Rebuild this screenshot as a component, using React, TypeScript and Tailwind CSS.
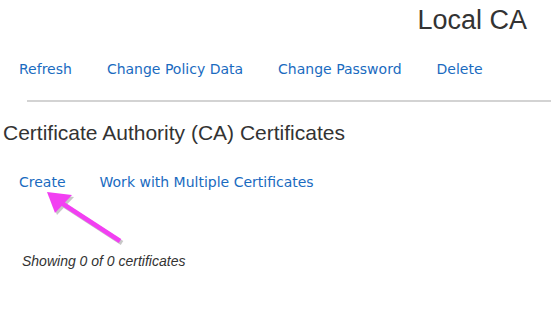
// Local CA — certificate authority overview

const topActions = ["Refresh", "Change Policy Data", "Change Password", "Delete"];
const certActions = ["Create", "Work with Multiple Certificates"];

function ActionLink({ label }: { label: string }) {
  return (
    <a
      href="#"
      className="text-[14px] leading-none text-[#1a6bbf] whitespace-nowrap"
      style={{ fontFamily: "'DejaVu Sans', Verdana, sans-serif" }}
    >
      {label}
    </a>
  );
}

function PointerArrow() {
  return (
    <svg className="absolute left-[40px] top-[185px]" width="90" height="65" viewBox="0 0 90 65">
      {/* soft shadow */}
      <g fill="#9a9a9a" opacity="0.55" transform="translate(2 2)">
        <polygon points="7,7 32,10 15,28" />
        <line x1="20" y1="17" x2="80" y2="56" stroke="#9a9a9a" strokeWidth="4.5" />
      </g>
      <polygon points="7,7 32,10 15,28" fill="#f23ff2" />
      <line x1="20" y1="17" x2="80" y2="56" stroke="#f23ff2" strokeWidth="4.5" strokeLinecap="butt" />
    </svg>
  );
}

export default function App() {
  return (
    <div
      className="relative w-[551px] h-[323px] overflow-hidden bg-white text-[#333]"
      style={{ fontFamily: "'Liberation Sans', Arial, sans-serif" }}
    >
      <div className="flex justify-end pr-[24px] pt-[4px]">
        <h1 className="text-[27px] leading-[32px] font-normal">Local CA</h1>
      </div>

      <nav className="flex gap-[35px] pl-[19px] mt-[26px]">
        {topActions.map(a => (
          <ActionLink key={a} label={a} />
        ))}
      </nav>

      <div className="ml-[27px] mt-[24px] h-[2px] bg-[#d3d3d3]" />

      <h2 className="pl-[3px] mt-[19px] text-[21px] leading-[24px] font-normal">
        Certificate Authority (CA) Certificates
      </h2>

      <nav className="flex gap-[34px] pl-[19px] mt-[30px]">
        {certActions.map(a => (
          <ActionLink key={a} label={a} />
        ))}
      </nav>

      <p className="pl-[22px] mt-[65px] text-[14px] italic leading-none">Showing 0 of 0 certificates</p>

      <PointerArrow />
    </div>
  );
}
